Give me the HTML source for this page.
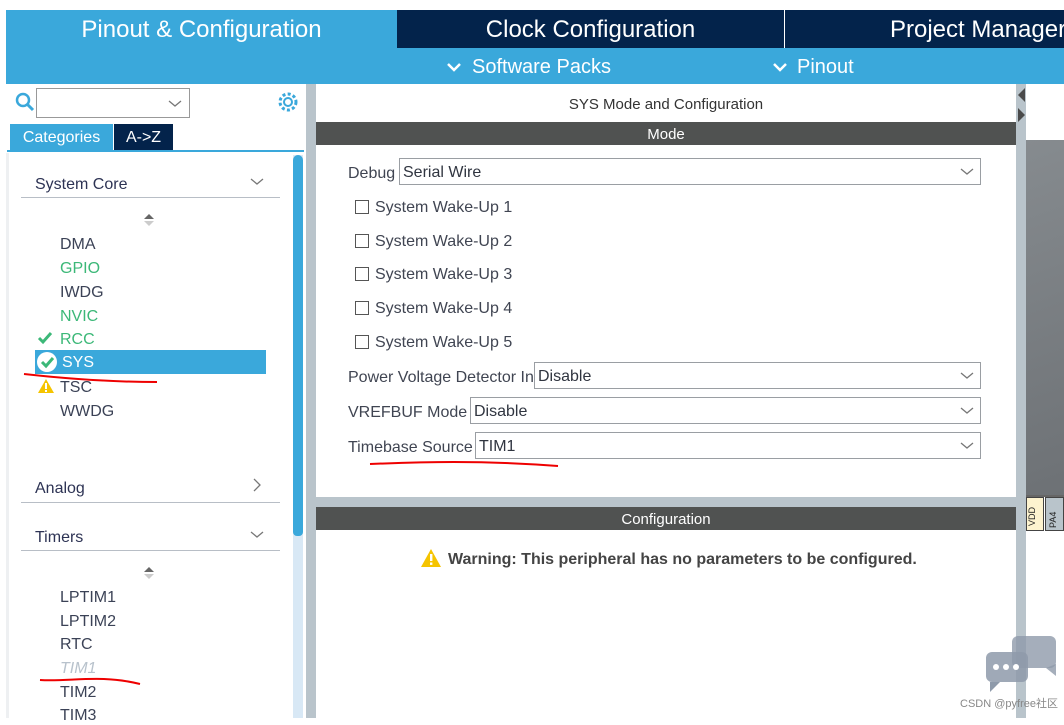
<!DOCTYPE html>
<html><head><meta charset="utf-8"><style>
*{margin:0;padding:0;box-sizing:border-box}
body{width:1064px;height:718px;overflow:hidden;background:#fff;font-family:"Liberation Sans",Arial,sans-serif;position:relative}
.a{position:absolute}
.t{white-space:nowrap}
.lbl{font-size:16px;color:#404552}
.sel{position:absolute;height:27px;border:1px solid #9a9ea3;background:#fff;font-size:16px;color:#303540;padding:5px 3px 0;white-space:nowrap}
.chev{position:absolute;right:6px;top:8px}
.cb{position:absolute;width:14px;height:14px;border:1.5px solid #555}
.item{position:absolute;left:60px;font-size:16px;color:#3b4256}
</style></head><body>
<div class="a" style="left:6px;top:10px;width:391px;height:38px;background:#3aa8db"></div>
<div class="a t" style="left:6px;top:16px;width:391px;text-align:center;font-size:24px;color:#fff">Pinout &amp; Configuration</div>
<div class="a" style="left:397px;top:10px;width:387px;height:38px;background:#03234b"></div>
<div class="a t" style="left:397px;top:16px;width:387px;text-align:center;font-size:24px;color:#fff">Clock Configuration</div>
<div class="a" style="left:784px;top:10px;width:1px;height:38px;background:#fff"></div>
<div class="a" style="left:785px;top:10px;width:279px;height:38px;background:#03234b"></div>
<div class="a t" style="left:890px;top:16px;font-size:24px;color:#fff">Project Manager</div>
<div class="a" style="left:6px;top:48px;width:1058px;height:36px;background:#3aa8db"></div>
<svg class="a" style="left:446px;top:61px" width="16" height="12"><path d="M2 3l6 6 6-6" stroke="#fff" stroke-width="2.5" fill="none"/></svg>
<div class="a t" style="left:472px;top:56px;font-size:20px;color:#fff">Software Packs</div>
<svg class="a" style="left:772px;top:61px" width="16" height="12"><path d="M2 3l6 6 6-6" stroke="#fff" stroke-width="2.5" fill="none"/></svg>
<div class="a t" style="left:797px;top:56px;font-size:20px;color:#fff">Pinout</div>

<div class="a" style="left:6px;top:84px;width:300px;height:634px;background:#fff"></div>
<svg class="a" style="left:14px;top:91px" width="22" height="22"><circle cx="9" cy="9" r="6" stroke="#3aa8db" stroke-width="2.5" fill="none"/><path d="M13 13l6 6" stroke="#3aa8db" stroke-width="3"/></svg>
<div class="a" style="left:36px;top:88px;width:154px;height:30px;border:1px solid #999;background:#fff"></div>
<svg class="a" style="left:168px;top:99px" width="14" height="9"><path d="M1 2l6 5 6-5" stroke="#777" stroke-width="1.3" fill="none"/></svg>
<svg class="a" style="left:277px;top:91px" width="22" height="22"><circle cx="11" cy="11" r="4" stroke="#3aa8db" stroke-width="2" fill="none"/><circle cx="11" cy="11" r="8" stroke="#3aa8db" stroke-width="3" stroke-dasharray="3 2.3" fill="none"/></svg>
<div class="a" style="left:10px;top:124px;width:103px;height:26px;background:#3aa8db"></div>
<div class="a t" style="left:10px;top:129px;width:103px;text-align:center;font-size:16px;color:#fff">Categories</div>
<div class="a" style="left:114px;top:124px;width:59px;height:26px;background:#03234b"></div>
<div class="a t" style="left:114px;top:129px;width:59px;text-align:center;font-size:16px;color:#fff">A-&gt;Z</div>
<div class="a" style="left:7px;top:150px;width:297px;height:2px;background:#3aa8db"></div>
<div class="a" style="left:6px;top:153px;width:3px;height:565px;background:#eef0f2"></div>
<div class="a" style="left:293px;top:155px;width:10px;height:563px;background:#d8e8f5"></div>
<div class="a" style="left:293px;top:155px;width:10px;height:381px;background:#3aa8db;border-radius:5px 5px 4px 4px"></div>
<div class="a" style="left:306px;top:84px;width:10px;height:634px;background:#b9c4cb"></div>

<div class="a t" style="left:35px;top:176px;font-size:16px;color:#2d3354">System Core</div>
<svg class="a" style="left:250px;top:177px" width="14" height="9"><path d="M1 2l6 5 6-5" stroke="#777" stroke-width="1.3" fill="none"/></svg>
<div class="a" style="left:21px;top:197px;width:259px;height:1px;background:#b8bec6"></div>
<svg class="a" style="left:143px;top:213px" width="12" height="14"><path d="M1 6l5-5 5 5z" fill="#666"/><path d="M1 8l5 5 5-5z" fill="#ccc"/></svg>
<div class="item" style="top:236px">DMA</div>
<div class="item" style="top:260px;color:#3cb878">GPIO</div>
<div class="item" style="top:284px">IWDG</div>
<div class="item" style="top:308px;color:#3cb878">NVIC</div>
<svg class="a" style="left:37px;top:331px" width="16" height="14"><path d="M2 7l4 4 8-9" stroke="#3cb878" stroke-width="3" fill="none"/></svg>
<div class="item" style="top:331px;color:#3cb878">RCC</div>
<div class="a" style="left:35px;top:350px;width:231px;height:24px;background:#3aa8db"></div>
<svg class="a" style="left:35px;top:350px" width="24" height="24"><circle cx="12" cy="12" r="10" fill="#fff"/><path d="M7 12l4 4 7-8" stroke="#3cb878" stroke-width="3" fill="none"/></svg>
<div class="a t" style="left:62px;top:354px;font-size:16px;color:#fff">SYS</div>
<svg class="a" style="left:37px;top:378px" width="18" height="16"><path d="M9 1l8 14H1z" fill="#f5c400"/><rect x="8" y="5" width="2" height="6" fill="#fff"/><rect x="8" y="12" width="2" height="2" fill="#fff"/></svg>
<div class="item" style="top:379px">TSC</div>
<div class="item" style="top:403px">WWDG</div>
<svg class="a" style="left:0;top:360px" width="170" height="30"><path d="M24 14 C60 18 110 22 157 22" stroke="#e00" stroke-width="2" fill="none"/></svg>

<div class="a t" style="left:35px;top:480px;font-size:16px;color:#2d3354">Analog</div>
<svg class="a" style="left:252px;top:477px" width="10" height="16"><path d="M2 2l6 6-6 6" stroke="#777" stroke-width="1.3" fill="none"/></svg>
<div class="a" style="left:21px;top:502px;width:259px;height:1px;background:#b8bec6"></div>
<div class="a t" style="left:35px;top:529px;font-size:16px;color:#2d3354">Timers</div>
<svg class="a" style="left:250px;top:530px" width="14" height="9"><path d="M1 2l6 5 6-5" stroke="#777" stroke-width="1.3" fill="none"/></svg>
<div class="a" style="left:21px;top:550px;width:259px;height:1px;background:#b8bec6"></div>
<svg class="a" style="left:143px;top:566px" width="12" height="14"><path d="M1 6l5-5 5 5z" fill="#666"/><path d="M1 8l5 5 5-5z" fill="#ccc"/></svg>
<div class="item" style="top:589px">LPTIM1</div>
<div class="item" style="top:613px">LPTIM2</div>
<div class="item" style="top:636px">RTC</div>
<div class="item" style="top:660px;color:#b8c2cc;font-style:italic">TIM1</div>
<svg class="a" style="left:30px;top:672px" width="120" height="20"><path d="M10 8 C40 10 70 2 110 12" stroke="#e00" stroke-width="2" fill="none"/></svg>
<div class="item" style="top:684px">TIM2</div>
<div class="item" style="top:707px">TIM3</div>

<div class="a t" style="left:316px;top:96px;width:700px;text-align:center;font-size:15px;color:#333">SYS Mode and Configuration</div>
<div class="a" style="left:316px;top:122px;width:700px;height:23px;background:#505251"></div>
<div class="a t" style="left:316px;top:126px;width:700px;text-align:center;font-size:15px;color:#fff">Mode</div>
<div class="a t lbl" style="left:348px;top:165px">Debug</div>
<div class="sel" style="left:399px;top:158px;width:582px">Serial Wire<svg class="chev" width="14" height="9"><path d="M1 2l6 5 6-5" stroke="#777" stroke-width="1.3" fill="none"/></svg></div>
<div class="cb" style="left:355px;top:200px"></div><div class="a t lbl" style="left:375px;top:199px">System Wake-Up 1</div>
<div class="cb" style="left:355px;top:234px"></div><div class="a t lbl" style="left:375px;top:233px">System Wake-Up 2</div>
<div class="cb" style="left:355px;top:267px"></div><div class="a t lbl" style="left:375px;top:266px">System Wake-Up 3</div>
<div class="cb" style="left:355px;top:301px"></div><div class="a t lbl" style="left:375px;top:300px">System Wake-Up 4</div>
<div class="cb" style="left:355px;top:335px"></div><div class="a t lbl" style="left:375px;top:334px">System Wake-Up 5</div>
<div class="a t lbl" style="left:348px;top:369px">Power Voltage Detector In</div>
<div class="sel" style="left:534px;top:362px;width:447px">Disable<svg class="chev" width="14" height="9"><path d="M1 2l6 5 6-5" stroke="#777" stroke-width="1.3" fill="none"/></svg></div>
<div class="a t lbl" style="left:348px;top:404px">VREFBUF Mode</div>
<div class="sel" style="left:470px;top:397px;width:511px">Disable<svg class="chev" width="14" height="9"><path d="M1 2l6 5 6-5" stroke="#777" stroke-width="1.3" fill="none"/></svg></div>
<div class="a t lbl" style="left:348px;top:439px">Timebase Source</div>
<div class="sel" style="left:475px;top:432px;width:506px">TIM1<svg class="chev" width="14" height="9"><path d="M1 2l6 5 6-5" stroke="#777" stroke-width="1.3" fill="none"/></svg></div>
<svg class="a" style="left:360px;top:458px" width="210" height="14"><path d="M10 6 C60 4 120 2 198 8" stroke="#e00" stroke-width="2" fill="none"/></svg>
<div class="a" style="left:316px;top:497px;width:700px;height:10px;background:#b9c4cb"></div>
<div class="a" style="left:316px;top:507px;width:700px;height:23px;background:#505251"></div>
<div class="a t" style="left:316px;top:511px;width:700px;text-align:center;font-size:15px;color:#fff">Configuration</div>
<svg class="a" style="left:420px;top:548px" width="22" height="20"><path d="M11 1l10 18H1z" fill="#f5c400"/><rect x="10" y="6" width="2.4" height="7" fill="#fff"/><rect x="10" y="14.5" width="2.4" height="2.4" fill="#fff"/></svg>
<div class="a t" style="left:448px;top:551px;font-size:16px;font-weight:bold;color:#444">Warning: This peripheral has no parameters to be configured.</div>

<div class="a" style="left:1016px;top:84px;width:10px;height:634px;background:#b9c4cb"></div>
<svg class="a" style="left:1017px;top:86px" width="9" height="40"><path d="M8 2v14L1 9z" fill="#4a4a4a"/><path d="M1 22v14l7-7z" fill="#4a4a4a"/></svg>
<div class="a" style="left:1026px;top:140px;width:38px;height:355px;background:linear-gradient(160deg,#868b8f,#6d7175)"></div>
<div class="a" style="left:1026px;top:495px;width:38px;height:2px;background:#666"></div>
<div class="a" style="left:1026px;top:497px;width:18px;height:34px;background:#fdf3cf;border:1px solid #444"></div>
<div class="a" style="left:1045px;top:497px;width:19px;height:34px;background:#b9c4cb;border:1px solid #444"></div>
<div class="a t" style="left:1027px;top:526px;font-size:9px;color:#222;transform:rotate(-90deg);transform-origin:0 0">VDD</div>
<div class="a t" style="left:1048px;top:528px;font-size:9px;color:#222;transform:rotate(-90deg);transform-origin:0 0">PA4</div>
<svg class="a" style="left:984px;top:634px" width="76" height="60"><rect x="28" y="2" width="44" height="32" rx="6" fill="#8e9aaa" opacity=".8"/><path d="M62 34l10 8V30z" fill="#8e9aaa" opacity=".8"/><rect x="2" y="18" width="42" height="30" rx="6" fill="#8e9aaa" opacity=".85"/><path d="M6 48v10l10-10z" fill="#8e9aaa"/><circle cx="12" cy="33" r="3" fill="#fff"/><circle cx="22" cy="33" r="3" fill="#fff"/><circle cx="32" cy="33" r="3" fill="#fff"/></svg>
<div class="a t" style="left:960px;top:695px;font-size:11px;color:#888">CSDN @pyfree社区</div>
</body></html>
